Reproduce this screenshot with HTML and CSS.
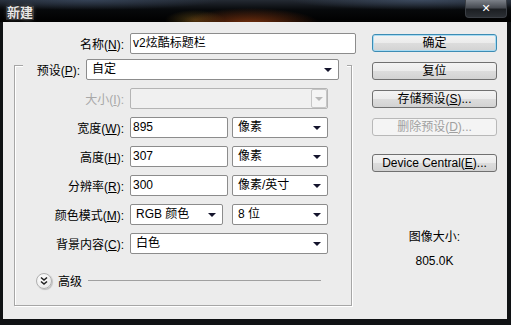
FILE: index.html
```html
<!DOCTYPE html>
<html>
<head>
<meta charset="utf-8">
<title>新建</title>
<link rel="stylesheet" href="styles.css">
</head>
<body>
<div class="window">
  <div class="titlebar">
    <span class="title">新建</span>
    <span class="close">&#x2715;</span>
  </div>
  <div class="client">
    <div class="left">
      <div class="row name-row">
        <label class="lbl">名称(<u>N</u>):</label>
        <div class="field w-name">v2炫酷标题栏</div>
      </div>

      <div class="group">
        <div class="row head">
          <label class="lbl">预设(<u>P</u>):</label>
          <div class="select w-preset">自定<span class="arrow"></span></div>
        </div>

        <div class="row">
          <label class="lbl off">大小(<u>I</u>):</label>
          <div class="select w-full disabled"><span class="dbtn"><span class="arrow"></span></span></div>
        </div>
        <div class="row">
          <label class="lbl">宽度(<u>W</u>):</label>
          <div class="field w-num">895</div>
          <div class="select w-unit gap4">像素<span class="arrow"></span></div>
        </div>
        <div class="row">
          <label class="lbl">高度(<u>H</u>):</label>
          <div class="field w-num">307</div>
          <div class="select w-unit gap4">像素<span class="arrow"></span></div>
        </div>
        <div class="row">
          <label class="lbl">分辨率(<u>R</u>):</label>
          <div class="field w-num">300</div>
          <div class="select w-unit gap4">像素/英寸<span class="arrow"></span></div>
        </div>
        <div class="row">
          <label class="lbl">颜色模式(<u>M</u>):</label>
          <div class="select w-mode">RGB 颜色<span class="arrow"></span></div>
          <div class="select w-unit gap9">8 位<span class="arrow"></span></div>
        </div>
        <div class="row">
          <label class="lbl">背景内容(<u>C</u>):</label>
          <div class="select w-full">白色<span class="arrow"></span></div>
        </div>

        <div class="advanced">
          <span class="expander">
            <svg width="10" height="10" viewBox="0 0 10 10"><path d="M2 1.5 L5 4 L8 1.5 M2 5.5 L5 8 L8 5.5" fill="none" stroke="#222" stroke-width="1.6"/></svg>
          </span>
          <span class="adv-text">高级</span>
          <span class="adv-line"></span>
        </div>
      </div>
    </div>

    <div class="right">
      <div class="btn default">确定</div>
      <div class="btn">复位</div>
      <div class="btn">存储预设(<u>S</u>)...</div>
      <div class="btn off">删除预设(<u>D</u>)...</div>
      <div class="btn central">Device Central(<u>E</u>)...</div>
      <div class="size-info">
        <div>图像大小:</div>
        <div>805.0K</div>
      </div>
    </div>
  </div>
</div>
</body>
</html>
```

FILE: styles.css
```css
/* Photoshop "New" dialog, Vista style */

body
{ margin: 0;
background: #000;
font-family: "Liberation Sans", "Noto Sans CJK SC", sans-serif;
font-size: 12px;
color: #000;
}

u
{ text-decoration: underline;
}

div.window
{ width: 511px;
height: 325px;
display: flex;
flex-direction: column;
background: #101214;
}

/* Title bar */

div.titlebar
{ height: 22px;
flex: none;
display: flex;
align-items: flex-start;
justify-content: space-between;
background:
  radial-gradient(ellipse 70px 16px at 250px 24px, rgba(170, 70, 20, 0.7), transparent),
  radial-gradient(ellipse 30px 10px at 195px 20px, rgba(150, 110, 30, 0.45), transparent),
  radial-gradient(ellipse 130px 10px at 90px 0px, rgba(70, 90, 120, 0.5), transparent),
  radial-gradient(ellipse 130px 10px at 420px 0px, rgba(80, 100, 130, 0.55), transparent),
  linear-gradient(#242a33, #07090b 45%, #000);
}

span.title
{ margin: 6px 0 0 6px;
padding: 0 1px;
font-size: 13px;
line-height: 14px;
font-weight: bold;
color: #e6e6e6;
background: rgba(110, 110, 110, 0.35);
text-shadow: 0 0 2px #000, 0 0 5px #8a8a8a;
}

span.close
{ width: 40px;
height: 17px;
margin-right: 4px;
display: flex;
align-items: center;
justify-content: center;
font-family: "DejaVu Sans", sans-serif;
font-size: 11px;
font-weight: bold;
color: #fff;
border: 1px solid #3b3f45;
border-top: none;
border-radius: 0 0 4px 4px;
background: linear-gradient(#7b8088, #474b52 45%, #1c1f23 55%, #2b2f34);
}

/* Client area */

div.client
{ flex: 1;
margin: 0 4px 6px 3px;
background: #ececec;
display: flex;
padding: 11px 0 0 11px;
}

div.left
{ width: 346px;
flex: none;
}

div.right
{ width: 125px;
margin-left: 12px;
padding-top: 1px;
}

/* Form rows */

div.row
{ display: flex;
align-items: center;
height: 21px;
margin-top: 8px;
}

div.name-row
{ margin-top: 0;
}

label.lbl
{ width: 109px;
margin-right: 6px;
text-align: right;
white-space: nowrap;
}

div.name-row label.lbl
{ width: 110px;
}

label.off
{ color: #a8a8a8;
}

div.field, div.select
{ height: 21px;
box-sizing: border-box;
border: 1px solid #8c8c8c;
border-radius: 2px;
background: #fff;
padding-left: 2px;
line-height: 19px;
white-space: nowrap;
position: relative;
}

div.select
{ padding-left: 5px;
}

div.w-name { width: 226px; }
div.w-preset { width: 253px; }
div.w-full { width: 198px; }
div.w-num { width: 98px; }
div.w-unit { width: 96px; }
div.w-mode { width: 93px; }
div.gap4 { margin-left: 4px; }
div.gap9 { margin-left: 9px; }

span.arrow
{ position: absolute;
right: 6px;
top: 8px;
width: 0;
height: 0;
border-left: 4px solid transparent;
border-right: 4px solid transparent;
border-top: 4px solid #14142c;
}

div.disabled
{ background: #f0f0f0;
border-color: #b4b4b4;
}

span.dbtn
{ position: absolute;
right: 0;
top: 0;
width: 16px;
height: 19px;
box-sizing: border-box;
border: 1px solid #c6c6c6;
border-radius: 2px;
background: #f4f4f4;
}

span.dbtn span.arrow
{ right: 3px;
top: 7px;
border-top-color: #b8b8b8;
}

/* Group box */

div.group
{ width: 338px;
box-sizing: border-box;
margin-top: 11px;
border: 1px solid #a6a6a6;
box-shadow: 1px 1px 0 #fff, inset 1px 1px 0 #fff;
padding-bottom: 16px;
}

div.head
{ margin: -7px 4px 0 8px;
padding-right: 8px;
background: #ececec;
}

div.head label.lbl
{ width: 57px;
}

div.advanced
{ display: flex;
align-items: center;
margin: 18px 0 0 21px;
}

span.expander
{ width: 16px;
height: 16px;
box-sizing: border-box;
border-radius: 50%;
border: 1px solid #b0b0b0;
background: radial-gradient(circle at 40% 35%, #fff, #e4e4e4);
box-shadow: 1px 1px 1px rgba(0, 0, 0, 0.2);
display: flex;
align-items: center;
justify-content: center;
}

span.adv-text
{ margin-left: 6px;
}

span.adv-line
{ width: 233px;
margin-left: 6px;
border-top: 1px solid #a0a0a0;
}

/* Buttons */

div.btn
{ height: 18px;
box-sizing: border-box;
margin-bottom: 10px;
border: 1px solid #707070;
border-radius: 3px;
background: linear-gradient(#f3f3f3, #ebebeb 50%, #dddddd 50%, #d2d2d2);
text-align: center;
line-height: 16px;
white-space: nowrap;
}

div.default
{ border-color: #3c8cb4;
box-shadow: inset 0 0 0 1px #a9dbf2;
}

div.off
{ color: #a0a0a0;
border-color: #b8b8b8;
background: #f4f4f4;
}

div.central
{ margin-top: 18px;
}

div.size-info
{ margin-top: 53px;
text-align: center;
line-height: 24px;
}
```
